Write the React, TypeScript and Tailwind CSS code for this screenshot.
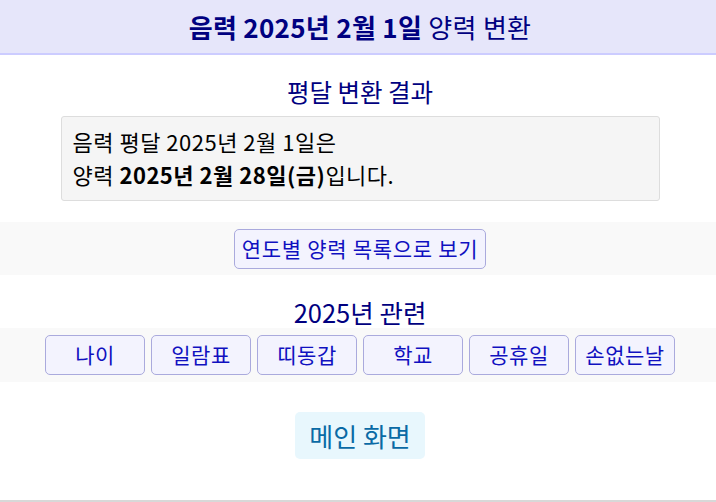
import * as React from "react"

const related = ["나이", "일람표", "띠동갑", "학교", "공휴일", "손없는날"]

const font = { fontFamily: '"Noto Sans CJK KR", "Noto Sans", sans-serif' }

export default function App() {
  return (
    <div className="h-[502px] w-full overflow-hidden bg-white text-black" style={font}>
      <div className="w-[720px]">
        {/* Header */}
        <header className="flex h-[55px] items-center justify-center border-b-2 border-[#ccccff] bg-[#e6e6fa]">
          <h1 className="text-[26px] leading-none tracking-[0.3px] text-[#000080]">
            <b className="font-bold">음력 2025년 2월 1일</b> 양력 변환
          </h1>
        </header>

        {/* Result */}
        <section className="flex flex-col items-center">
          <h2 className="mt-[22px] h-[39px] text-[24.5px] leading-[30px] text-[#000080]">평달 변환 결과</h2>
          <div className="h-[85px] w-[599px] rounded-[3px] border border-[#dddddd] bg-[#f5f5f5] px-[11px] pt-[8px] text-[22px] leading-[33px] tracking-[0.5px]">
            음력 평달 2025년 2월 1일은
            <br />
            양력 <b className="font-bold">2025년 2월 28일(금)</b>입니다.
          </div>
        </section>

        {/* Yearly list */}
        <div className="mt-[21px] flex h-[53px] items-center justify-center bg-[#f9f9f9]">
          <button className="h-[40px] rounded-[5px] border border-[#aaaadd] bg-[#f3f3fe] px-[7px] text-[21px] tracking-[0.7px] text-[#1010c0]">
            연도별 양력 목록으로 보기
          </button>
        </div>

        {/* Related */}
        <h2 className="mt-[22px] h-[30px] text-center text-[25.5px] leading-[30px] text-[#000080]">2025년 관련</h2>
        <div className="mt-[1px] flex h-[54px] items-center justify-center gap-[6px] bg-[#f9f9f9]">
          {related.map((label) => (
            <button
              key={label}
              className="h-[40px] min-w-[100px] rounded-[5px] border border-[#aaaadd] bg-[#f3f3fe] px-[4px] text-[21px] tracking-[0.5px] text-[#1010c0]"
            >
              {label}
            </button>
          ))}
        </div>

        {/* Main */}
        <div className="mt-[30px] flex justify-center">
          <button className="h-[47px] rounded-[5px] bg-[#e8f7fd] px-[14px] text-[26px] text-[#0a6aa5]">메인 화면</button>
        </div>

        <div className="mt-[41px] h-[2px] bg-[#d8d8d8]" />
      </div>
    </div>
  )
}
